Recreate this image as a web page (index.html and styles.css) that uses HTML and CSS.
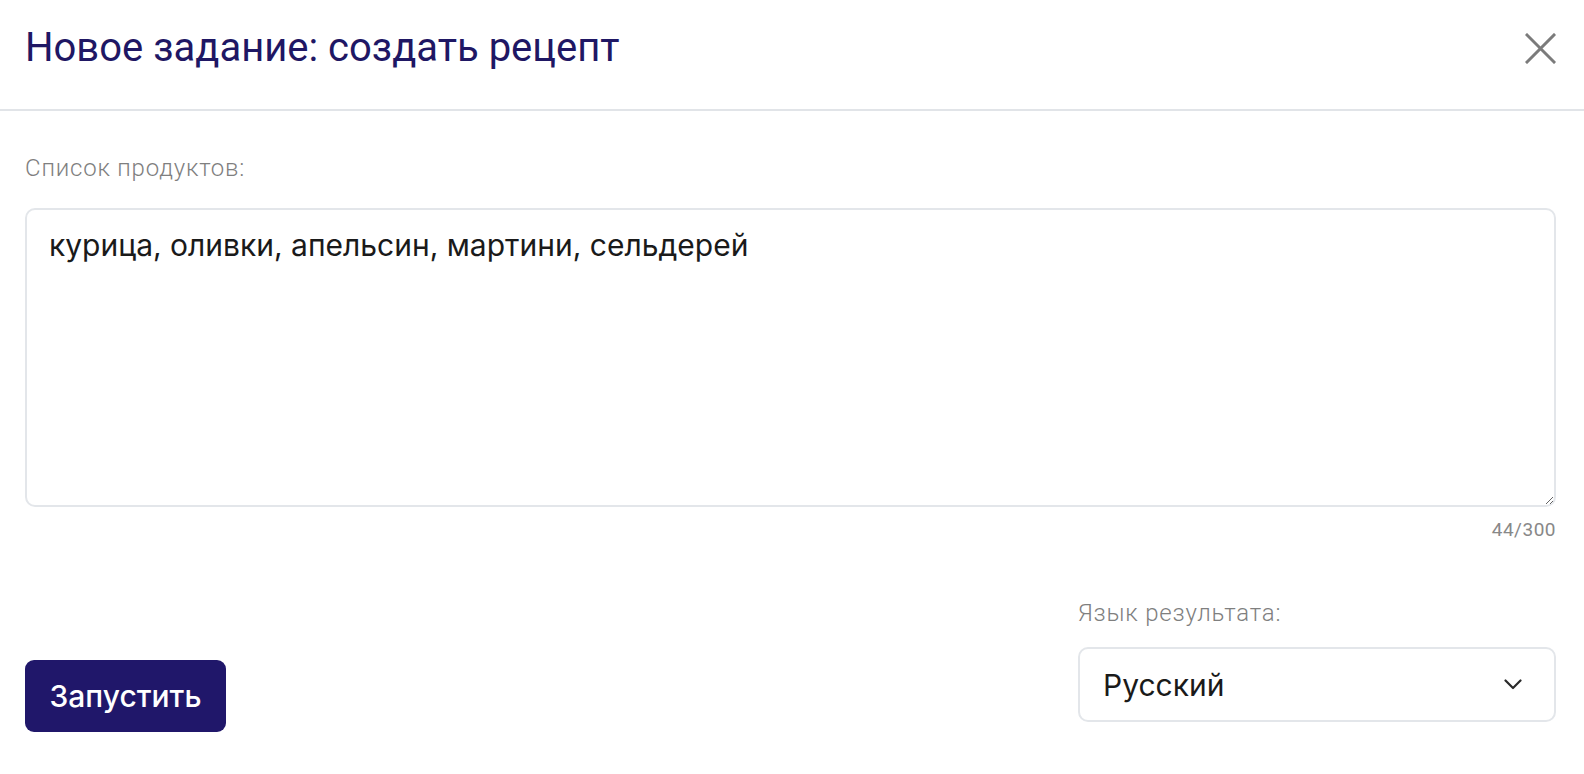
FILE: index.html
```html
<!DOCTYPE html>
<html lang="ru">
<head>
<meta charset="utf-8">
<title>Новое задание</title>
<link rel="stylesheet" href="styles.css">
</head>
<body>
<div class="modal">
  <header class="modal-header">
    <h1 class="modal-title">Новое задание: создать рецепт</h1>
    <button class="close-btn" aria-label="Закрыть">
      <svg width="31" height="31" viewBox="0 0 31 31"><path d="M2 2 L29 29 M29 2 L2 29" stroke="#7b7b7b" stroke-width="3" stroke-linecap="square" fill="none"/></svg>
    </button>
  </header>
  <main class="modal-body">
    <label class="field-label" for="products">Список продуктов:</label>
    <textarea id="products" class="products">курица, оливки, апельсин, мартини, сельдерей</textarea>
    <div class="counter">44/300</div>
    <div class="bottom-row">
      <button class="run-btn">Запустить</button>
      <div class="lang-group">
        <div class="field-label lang-label">Язык результата:</div>
        <div class="select">
          <span class="select-value">Русский</span>
          <svg width="18" height="11" viewBox="0 0 18 11"><path d="M1.5 1.5 L9 9 L16.5 1.5" stroke="#2a2a2a" stroke-width="2.2" fill="none" stroke-linecap="round" stroke-linejoin="round"/></svg>
        </div>
      </div>
    </div>
  </main>
</div>
</body>
</html>
```
FILE: styles.css
```css
* { box-sizing: border-box; }
html, body { margin: 0; padding: 0; background: #ffffff; }
body { font-family: Roboto, "Noto Sans", sans-serif; }

.modal { width: 1584px; }

.modal-header {
  display: flex;
  align-items: center;
  justify-content: space-between;
  padding: 24px 28px 37px 25px;
  border-bottom: 2px solid #e1e4e8;
}
.modal-title {
  margin: 0;
  font-family: Roboto, sans-serif;
  font-weight: 400;
  font-size: 40px;
  line-height: 48px;
  color: #1f1764;
}
.close-btn {
  border: 0;
  background: none;
  padding: 0;
  width: 31px;
  height: 31px;
  display: flex;
  cursor: pointer;
}

.modal-body {
  padding: 45px 28px 0 25px;
  display: flex;
  flex-direction: column;
}
.field-label {
  font-family: Roboto, sans-serif;
  font-weight: 300;
  font-size: 24px;
  letter-spacing: 0.8px;
  line-height: 24px;
  color: #7f7f7f;
}
.products {
  display: block;
  margin-top: 28px;
  width: 100%;
  height: 299px;
  border: 2px solid #e3e6ea;
  border-radius: 10px;
  padding: 17px 22px;
  font-family: Inter, sans-serif;
  font-size: 30px;
  line-height: 36px;
  color: #1a1a1a;
  resize: vertical;
  outline: none;
}
.counter {
  align-self: flex-end;
  margin-top: 12px;
  font-family: Roboto, sans-serif;
  font-size: 19px;
  letter-spacing: 0.5px;
  line-height: 22px;
  color: #888888;
}
.bottom-row {
  margin-top: 60px;
  display: flex;
  justify-content: space-between;
  align-items: flex-end;
}
.run-btn {
  width: 201px;
  height: 72px;
  border: 0;
  border-radius: 9px;
  background: #20176a;
  color: #ffffff;
  font-family: Inter, sans-serif;
  font-weight: 500;
  font-size: 30px;
  padding: 0;
  cursor: pointer;
}
.lang-group {
  width: 478px;
  margin-bottom: 10px;
  display: flex;
  flex-direction: column;
}
.lang-label { margin-bottom: 22px; }
.select {
  height: 75px;
  border: 2px solid #e3e6ea;
  border-radius: 10px;
  display: flex;
  align-items: center;
  justify-content: space-between;
  padding: 0 32px 0 23px;
}
.select-value {
  font-family: Inter, sans-serif;
  font-size: 30px;
  color: #1a1a1a;
}
```
